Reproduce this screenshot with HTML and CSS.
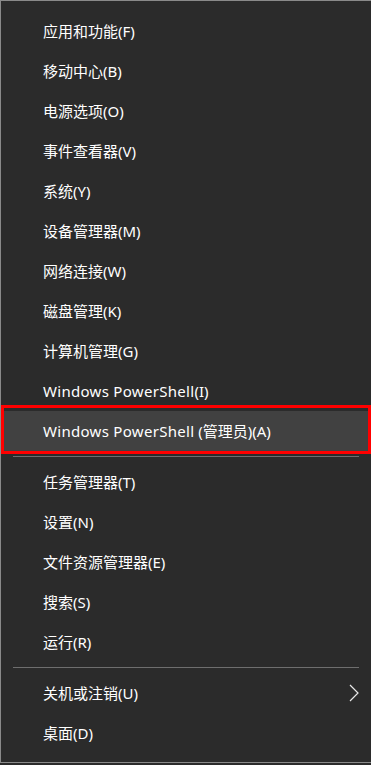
FILE: index.html
```html
<!DOCTYPE html>
<html lang="zh-CN">
<head>
<meta charset="utf-8">
<link rel="stylesheet" href="styles.css">
</head>
<body>
<div class="menu">
  <div class="item">应用和功能(F)</div>
  <div class="item">移动中心(B)</div>
  <div class="item">电源选项(O)</div>
  <div class="item">事件查看器(V)</div>
  <div class="item">系统(Y)</div>
  <div class="item">设备管理器(M)</div>
  <div class="item">网络连接(W)</div>
  <div class="item">磁盘管理(K)</div>
  <div class="item">计算机管理(G)</div>
  <div class="item"><span class="en">Windows PowerShell</span>(I)</div>
  <div class="item active"><span class="en">Windows PowerShell</span> (管理员)(A)</div>
  <div class="sep"></div>
  <div class="item">任务管理器(T)</div>
  <div class="item">设置(N)</div>
  <div class="item">文件资源管理器(E)</div>
  <div class="item">搜索(S)</div>
  <div class="item">运行(R)</div>
  <div class="sep"></div>
  <div class="item sub">关机或注销(U)<svg class="chev" width="10" height="18" viewBox="0 0 10 18"><path d="M1 1 L9 9 L1 17" fill="none" stroke="#e8e8e8" stroke-width="1.2"/></svg></div>
  <div class="item">桌面(D)</div>
</div>
</body>
</html>
```

FILE: styles.css
```css
html, body {
  margin: 0;
  padding: 0;
  background: #2b2b2b;
}
.menu {
  width: 371px;
  height: 763px;
  box-sizing: border-box;
  background: #2b2b2b;
  border-left: 1px solid #8a8a8a;
  border-top: 1px solid #8a8a8a;
  border-bottom: 1px solid #8a8a8a;
  padding-top: 10px;
  font-family: "Segoe UI", "Noto Sans", "Microsoft YaHei", "Noto Sans CJK SC", sans-serif;
  font-size: 15px;
  color: #ffffff;
}
.item {
  height: 40px;
  line-height: 40px;
  padding-left: 42px;
  position: relative;
  white-space: nowrap;
}
.en {
  letter-spacing: 0.3px;
}
.item.active {
  background: #414141;
}
.item.active::after {
  content: "";
  position: absolute;
  left: 0;
  right: 0;
  top: -6px;
  bottom: -3px;
  border: 3px solid #ff0000;
}
.sep {
  height: 1px;
  margin: 5px 12px 5px 12px;
  background: #6e6e6e;
}
.chev {
  position: absolute;
  right: 12px;
  top: 11px;
}
```
